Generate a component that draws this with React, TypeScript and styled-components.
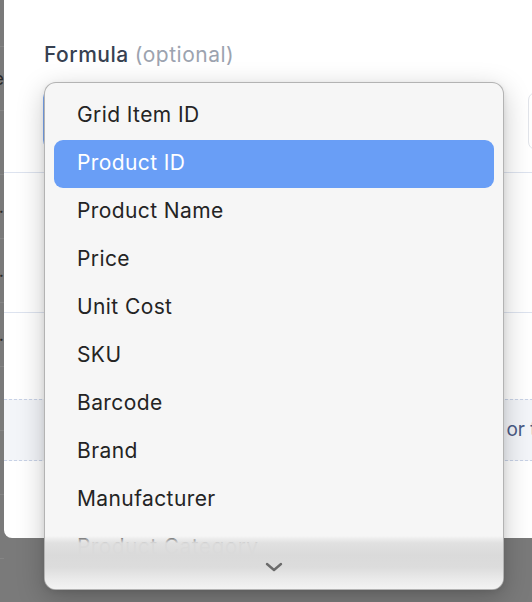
import React from "react";
import styled, { createGlobalStyle } from "styled-components";

const GlobalStyle = createGlobalStyle`
  html, body {
    margin: 0;
    padding: 0;
    width: 532px;
    height: 602px;
    overflow: hidden;
    background: #7a7a7a;
    font-family: Inter, "Noto Sans", "Liberation Sans", sans-serif;
  }
`;

const Screen = styled.div`
  position: relative;
  display: flex;
  align-items: flex-start;
  width: 532px;
  height: 602px;
  overflow: hidden;
`;

const BackStrip = styled.div`
  width: 4px;
  flex-shrink: 0;
  display: flex;
  flex-direction: column;
  overflow: hidden;
`;

const BackRow = styled.div<{ $first?: boolean }>`
  height: ${(p) => (p.$first ? 47 : 64)}px;
  flex-shrink: 0;
  box-sizing: border-box;
  border-bottom: 1px solid #858585;
  display: flex;
  align-items: center;
  justify-content: flex-end;
  font-size: 18px;
  color: #2a2a2a;
  white-space: nowrap;
`;

const Modal = styled.div`
  flex: 1;
  min-width: 0;
  height: 538px;
  box-sizing: border-box;
  background: #ffffff;
  border-bottom-left-radius: 8px;
  padding: 43px 0 0 40px;
  display: flex;
  flex-direction: column;
  overflow: hidden;
`;

const Label = styled.div`
  font-size: 21px;
  line-height: 24px;
  font-weight: 500;
  letter-spacing: 0.5px;
  color: #374151;
  white-space: nowrap;
`;

const Optional = styled.span`
  font-weight: 400;
  color: #9ca3af;
`;

const FieldRow = styled.div`
  display: flex;
  gap: 24px;
  margin-top: 21px;
  height: 62px;
  flex-shrink: 0;
`;

const SelectField = styled.div`
  width: 461px;
  margin-left: -1px;
  flex-shrink: 0;
  box-sizing: border-box;
  border: 2px solid #7aa7f2;
  border-radius: 10px;
`;

const TextInput = styled.div`
  width: 200px;
  flex-shrink: 0;
  margin-top: 4px;
  box-sizing: border-box;
  border: 1px solid #e1e4ea;
  border-radius: 8px;
`;

const Divider = styled.div<{ $gap: number }>`
  height: 1px;
  flex-shrink: 0;
  background: #dde3ef;
  margin-top: ${(p) => p.$gap}px;
  margin-left: -40px;
  width: 700px;
`;

const HintBox = styled.div`
  margin-top: 86px;
  margin-left: -40px;
  width: 1000px;
  height: 62px;
  flex-shrink: 0;
  box-sizing: border-box;
  border-top: 1px dashed #c8d2e6;
  border-bottom: 1px dashed #c8d2e6;
  background: #f3f5f9;
  display: flex;
  align-items: center;
  padding: 0 0 2px 49px;
  font-size: 19px;
  color: #4a5b86;
  white-space: nowrap;
`;

const Menu = styled.div`
  position: absolute;
  left: 44px;
  top: 82px;
  width: 460px;
  height: 508px;
  box-sizing: border-box;
  background: #f6f6f6;
  border: 1px solid rgba(0, 0, 0, 0.27);
  border-radius: 12px;
  box-shadow: 0 8px 28px rgba(0, 0, 0, 0.22), 0 2px 6px rgba(0, 0, 0, 0.08);
  overflow: hidden;
  padding: 9px 9px 0;
`;

const Option = styled.div<{ $active?: boolean }>`
  height: 48px;
  box-sizing: border-box;
  display: flex;
  align-items: center;
  padding: 0 0 4px 23px;
  border-radius: 9px;
  font-size: 21px;
  letter-spacing: 0.4px;
  color: ${(p) => (p.$active ? "#ffffff" : "#242424")};
  background: ${(p) => (p.$active ? "#699ef6" : "transparent")};
  white-space: nowrap;
`;

const ScrollArrow = styled.div`
  position: absolute;
  left: 0;
  right: 0;
  bottom: 0;
  height: 53px;
  display: flex;
  align-items: flex-end;
  justify-content: center;
  padding-bottom: 17px;
  box-sizing: border-box;
  background: linear-gradient(
    to bottom,
    rgba(240, 240, 240, 0) 0px,
    rgba(228, 228, 228, 0.6) 3px,
    rgba(224, 224, 224, 0.97) 7px,
    #dadada 19px,
    #dcdcdc 31px,
    #eaeaea 43px,
    #f3f3f3 53px
  );
`;

const options = [
  "Grid Item ID",
  "Product ID",
  "Product Name",
  "Price",
  "Unit Cost",
  "SKU",
  "Barcode",
  "Brand",
  "Manufacturer",
  "Product Category",
  "Supplier",
];

const backRows = ["", "Size", "", "Total.", "Sum..", "Avg.", "", "", ""];

export default function App() {
  return (
    <>
      <GlobalStyle />
      <Screen>
        <BackStrip>
          {backRows.map((r, i) => (
            <BackRow key={i} $first={i === 0}>
              {r}
            </BackRow>
          ))}
        </BackStrip>

        <Modal>
          <Label>
            Formula <Optional>(optional)</Optional>
          </Label>
          <FieldRow>
            <SelectField />
            <TextInput />
          </FieldRow>
          <Divider $gap={22} />
          <Divider $gap={139} />
          <HintBox>Use a formula to combine values from other fields or type a value</HintBox>
        </Modal>

        <Menu>
          {options.map((o) => (
            <Option key={o} $active={o === "Product ID"}>
              {o}
            </Option>
          ))}
          <ScrollArrow>
            <svg width="18" height="10" viewBox="0 0 18 10" fill="none">
              <path
                d="M2 2l7 6 7-6"
                stroke="#6b6b6b"
                strokeWidth="2.4"
                strokeLinecap="round"
                strokeLinejoin="round"
              />
            </svg>
          </ScrollArrow>
        </Menu>
      </Screen>
    </>
  );
}
